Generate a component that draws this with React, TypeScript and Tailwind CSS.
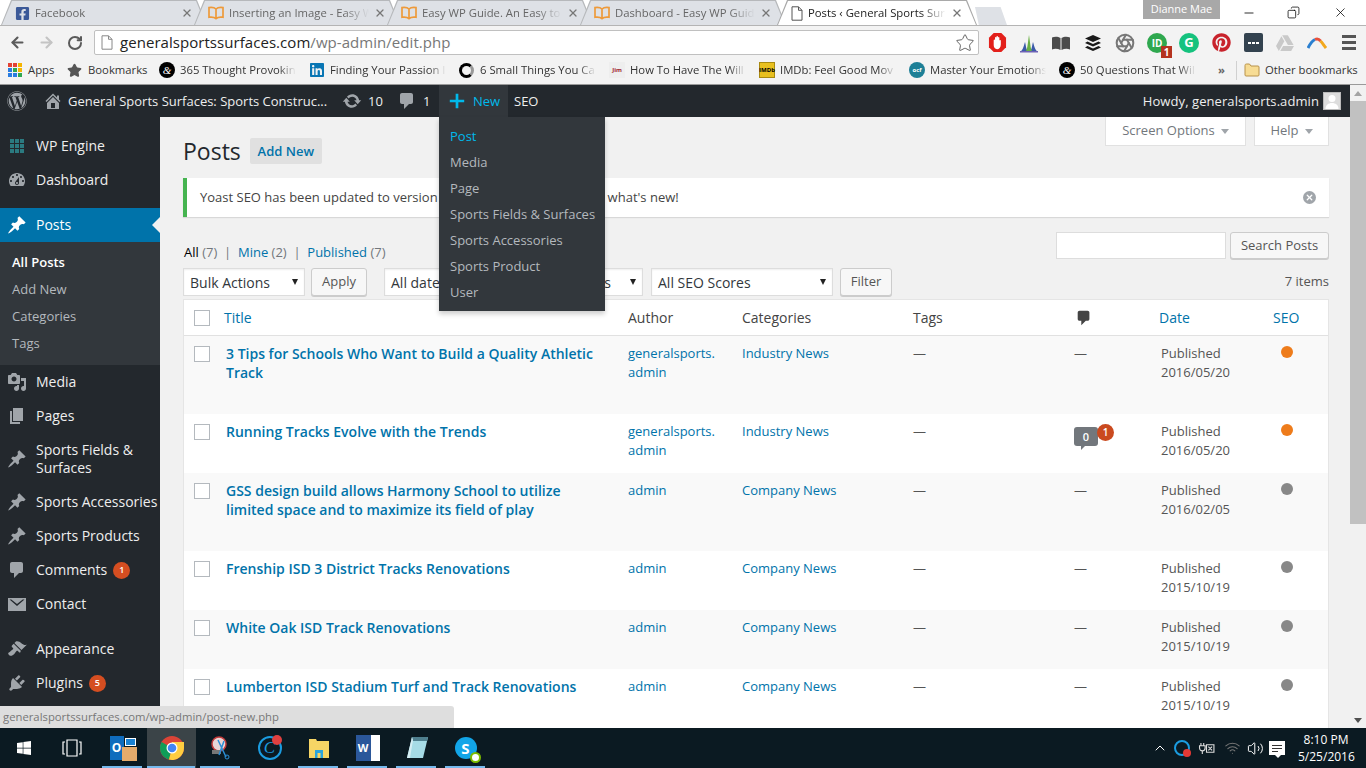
import { ArrowLeft, ArrowRight, Aperture, RotateCw, Star, X, Minus, Copy, ChevronUp, Volume2, Wifi } from 'lucide-react'
import { FaWordpress, FaPinterest, FaGoogleDrive, FaFacebookSquare, FaLinkedin, FaWindows } from 'react-icons/fa'

const PATHS = {
  pin: 'M10.44 3.02l1.82-1.82 6.36 6.35-1.83 1.82c-1.05-.68-2.48-.57-3.41.36l-.75.75c-.92.93-1.04 2.35-.35 3.41l-1.83 1.82-2.41-2.41-2.8 2.79c-.42.42-3.38 2.71-3.8 2.29s1.86-3.39 2.28-3.81l2.79-2.79L4.1 9.36l1.83-1.82c1.05.69 2.48.57 3.4-.36l.75-.75c.93-.92 1.05-2.35.36-3.41z',
  comment: 'M5 2h9c1.1 0 2 .9 2 2v7c0 1.1-.9 2-2 2h-2l-5 5v-5H5c-1.1 0-2-.9-2-2V4c0-1.1.9-2 2-2z',
  dashboard: 'M3.76 16h12.48c1.1-1.37 1.76-3.11 1.76-5 0-4.42-3.58-8-8-8s-8 3.58-8 8c0 1.89.66 3.63 1.76 5zM10 4c.55 0 1 .45 1 1s-.45 1-1 1-1-.45-1-1 .45-1 1-1zM6 6c.55 0 1 .45 1 1s-.45 1-1 1-1-.45-1-1 .45-1 1-1zm8 0c.55 0 1 .45 1 1s-.45 1-1 1-1-.45-1-1 .45-1 1-1zm-5.37 5.55L12 7v6c0 1.1-.9 2-2 2s-2-.9-2-2c0-.57.24-1.08.63-1.45zM4 10c.55 0 1 .45 1 1s-.45 1-1 1-1-.45-1-1 .45-1 1-1zm12 0c.55 0 1 .45 1 1s-.45 1-1 1-1-.45-1-1 .45-1 1-1zm-5 3c0-.55-.45-1-1-1s-1 .45-1 1 .45 1 1 1 1-.45 1-1z',
  media: 'M13 11V4c0-.55-.45-1-1-1h-1.67L9 1H5L3.67 3H2c-.55 0-1 .45-1 1v7c0 .55.45 1 1 1h10c.55 0 1-.45 1-1zM7 4.5c1.38 0 2.5 1.12 2.5 2.5S8.38 9.5 7 9.5 4.5 8.38 4.5 7 5.62 4.5 7 4.5zM14 6h5v10.5c0 1.38-1.12 2.5-2.5 2.5S14 17.88 14 16.5s1.12-2.5 2.5-2.5c.17 0 .34.02.5.05V9h-3V6zm-4 8.05V13h2v3.5c0 1.38-1.12 2.5-2.5 2.5S7 17.88 7 16.5 8.12 14 9.5 14c.17 0 .34.02.5.05z',
  page: 'M6 15V2h10v13H6zm-1 1h8v2H3V5h2v11z',
  brush: 'M14.48 11.06L7.41 3.99l1.5-1.5c.5-.56 2.3-.47 3.51.32 1.21.8 1.43 1.28 2.91 2.1 1.18.64 2.45 1.26 4.45.85zm-.71.71L6.7 4.7 4.93 6.47c-.39.39-.39 1.02 0 1.41l1.06 1.06c.39.39.39 1.03 0 1.42-.6.6-1.43 1.11-2.21 1.69-.35.26-.7.53-1.01.84C1.43 13.23.4 14.4 2.02 16c1.6 1.61 3.7.58 4.98-.71.31-.31.58-.66.84-1.01.58-.78 1.09-1.61 1.69-2.21.39-.39 1.02-.39 1.41 0l1.06 1.06c.39.39 1.02.39 1.41 0z',
  plugin: 'M13.11 4.36L9.87 7.6 8 5.73l3.24-3.24c.35-.34 1.05-.2 1.56.32.52.51.66 1.21.31 1.55zm-8 1.77l.91-1.12 9.01 9.01-1.19.84c-.71.71-2.63 1.16-3.82 1.16H6.14L4.9 17.26c-.59.59-1.54.59-2.12 0-.59-.58-.59-1.53 0-2.12l1.24-1.24v-3.88c0-1.13.4-3.19 1.09-3.89zm7.26 3.97l3.24-3.24c.34-.35 1.04-.21 1.55.31.52.51.66 1.21.31 1.55l-3.24 3.25z',
  update: 'M10.2 3.28c3.53 0 6.43 2.61 6.92 6h2.08l-3.5 4-3.5-4h2.32c-.45-1.97-2.21-3.45-4.32-3.45-1.45 0-2.73.71-3.54 1.78L4.95 5.66C6.23 4.2 8.11 3.28 10.2 3.28zm-.4 13.44c-3.52 0-6.43-2.61-6.92-6H.8l3.5-4c1.17 1.33 2.33 2.67 3.5 4H5.48c.45 1.97 2.21 3.45 4.32 3.45 1.45 0 2.73-.71 3.54-1.78l1.71 1.95c-1.28 1.46-3.15 2.38-5.25 2.38z',
  home: 'M16 8.5l1.53 1.53-1.06 1.06L10 4.62l-6.47 6.47-1.06-1.06L10 2.5l4 4v-2h2v4zm-6-2.46l6 5.99V18H4v-5.97zM12 17v-5H8v5h4z',
  plus: 'M18 8.5v3h-6.5V18h-3v-6.5H2v-3h6.5V2h3v6.5z',
  mail: 'M1 4h18v13H1zM2.5 5.5L10 12l7.5-6.5h-1.8L10 10 4.3 5.5z',
}

function Dash({ d, className }: { d: string; className?: string }) {
  return (
    <svg viewBox="0 0 20 20" className={className} fill="currentColor" fillRule="evenodd">
      <path d={d} />
    </svg>
  )
}

function BookFavicon() {
  return (
    <svg viewBox="0 0 16 14" className="h-[14px] w-[16px] shrink-0" fill="none" stroke="#ee9a3a" strokeWidth="1.7">
      <path d="M8 3C6.5 1.6 4 1.2 1 1.6v9.6c3-.4 5.500 0 7 1.400 1.500-1.400 4-1.800 7-1.400V1.600C12 1.200 9.500 1.600 8 3zM8 3v9.600" />
    </svg>
  )
}

function PageFavicon() {
  return (
    <svg viewBox="0 0 12 15" className="h-[15px] w-[12px] shrink-0" fill="#fff" stroke="#555" strokeWidth="1">
      <path d="M1 .8h6.5L11 4.3v9.900H1zM7.500.8v3.500H11" />
    </svg>
  )
}

function Tab({ title, icon, active, first }: { title: string; icon: React.ReactNode; active?: boolean; first?: boolean }) {
  return (
    <div
      className={`relative h-[25px] pt-[1px] pr-[1px] pl-[1px] [clip-path:polygon(0_100%,10px_0,calc(100%-10px)_0,100%_100%)] ${
        active ? '-ml-[9px] z-10 w-[200px] bg-[#a9a9a9]' : `w-[206px] bg-[#b6b8bb] ${first ? '' : '-ml-[13px]'}`
      }`}
    >
      <div
        className={`flex h-full items-center pl-[13px] pr-[13px] [clip-path:polygon(0_100%,10px_0,calc(100%-10px)_0,100%_100%)] ${
          active ? 'bg-white' : 'bg-[#dee1e6]'
        }`}
      >
        {icon}
        <span
          className={`ml-[5px] min-w-0 flex-1 overflow-hidden whitespace-nowrap text-[11.3px] [mask-image:linear-gradient(to_right,black_80%,transparent_98%)] ${
            active ? 'text-[#222]' : 'text-[#666]'
          }`}
        >
          {title}
        </span>
        <X className="ml-[2px] h-[12px] w-[12px] shrink-0 text-[#777]" strokeWidth={2.6} />
      </div>
    </div>
  )
}

function Ext({ children }: { children: React.ReactNode }) {
  return <div className="flex h-[25px] w-[32px] items-center justify-center">{children}</div>
}

function Extensions() {
  return (
    <div className="flex items-center">
      <Ext>
        <svg viewBox="0 0 20 22" className="h-[21px] w-[19px]">
          <path d="M6 1h8l5 5v10l-5 5H6l-5-5V6z" fill="#e3201b" />
          <path d="M6 8.500c0-1 1.400-1 1.400 0V6c0-1 1.500-1 1.500 0V5c0-1 1.600-1 1.600 0v1c0-1 1.500-1 1.500 0v3c0-1 1.500-1 1.500 0v4c0 3-2 5-4 5s-3.500-1.500-3.500-4z" fill="#fff" />
        </svg>
      </Ext>
      <Ext>
        <svg viewBox="0 0 18 20" className="h-[20px] w-[18px]">
          <path d="M1 18c2-1 3-6 4-9 1 3 1 8 3 9z" fill="#3b5aa8" />
          <path d="M10 18c2-1 2-6 3-9 1 3 2 8 4 9z" fill="#3b5aa8" />
          <path d="M6 18c1.500-2 2-10 3-16 1 6 1.500 14 3 16z" fill="#69b044" />
          <path d="M0 18h18v1.500H0z" fill="#6d62b5" />
        </svg>
      </Ext>
      <Ext>
        <svg viewBox="0 0 20 16" className="h-[16px] w-[20px]" fill="#4b4b4b">
          <path d="M1 2.500C3.500 1.500 7 1.500 9.500 3v12C7 13.700 3.500 13.500 1 14.500zM19 2.500C16.500 1.500 13 1.500 10.500 3v12c2.500-1.300 6-1.500 8.500-.5z" />
        </svg>
      </Ext>
      <Ext>
        <svg viewBox="0 0 18 18" className="h-[18px] w-[18px]" fill="#1a1a1a">
          <path d="M9 1l8 3.500L9 8 1 4.500zM3.500 7.500L9 10l5.500-2.500L17 9l-8 3.500L1 9zM3.500 12L9 14.500l5.500-2.500 2.500 1.500L9 17l-8-3.500z" />
        </svg>
      </Ext>
      <Ext>
        <Aperture className="h-[20px] w-[20px] text-[#777]" strokeWidth={2.4} />
      </Ext>
      <Ext>
        <div className="relative flex h-[20px] w-[20px] items-center justify-center rounded-full bg-[#2fa84f]">
          <span className="text-[10px] font-bold leading-none text-white">ID</span>
          <span className="absolute -bottom-[5px] -right-[5px] flex h-[12px] w-[11px] items-center justify-center bg-[#b5331f] text-[10px] font-bold leading-none text-white">1</span>
        </div>
      </Ext>
      <Ext>
        <div className="flex h-[20px] w-[20px] items-center justify-center rounded-full bg-[#15c27e]">
          <span className="text-[13px] font-bold leading-none text-white">G</span>
        </div>
      </Ext>
      <Ext>
        <FaPinterest className="h-[19px] w-[19px] text-[#c8232c]" />
      </Ext>
      <Ext>
        <div className="flex h-[19px] w-[19px] items-center justify-center gap-[1px] rounded-[2px] bg-[#33424f]">
          <span className="h-[2px] w-[3px] bg-white" />
          <span className="h-[2px] w-[3px] bg-white" />
          <span className="h-[2px] w-[3px] bg-white" />
        </div>
      </Ext>
      <Ext>
        <FaGoogleDrive className="h-[18px] w-[18px] text-[#c9c9c9]" />
      </Ext>
      <Ext>
        <svg viewBox="0 0 20 12" className="h-[12px] w-[20px]" fill="none" strokeWidth="3">
          <path d="M1 11C3 7 5 4 8 2.500" stroke="#2a7fd0" />
          <path d="M8 2.500C10 1.500 12 2 13.500 4" stroke="#e8503a" />
          <path d="M13.500 4C15.500 6 17 8.500 19 11" stroke="#f2a81d" />
        </svg>
      </Ext>
      <Ext>
        <div className="flex w-[14px] flex-col gap-[3px]">
          <span className="h-[3px] bg-[#555]" />
          <span className="h-[3px] bg-[#555]" />
          <span className="h-[3px] bg-[#555]" />
        </div>
      </Ext>
    </div>
  )
}

function Mark({ kind }: { kind: 'e' | 'ring' | 'in' | 'jim' | 'imdb' | 'ocf' }) {
  if (kind === 'e')
    return <span className="flex h-[16px] w-[16px] shrink-0 items-center justify-center rounded-full bg-black font-['Liberation_Serif',serif] text-[11px] italic leading-none text-white">&amp;</span>
  if (kind === 'ring')
    return <span className="mr-[1px] h-[15px] w-[15px] shrink-0 rounded-full border-[3px] border-black border-r-[#999]" />
  if (kind === 'in') return <FaLinkedin className="h-[16px] w-[16px] shrink-0 text-[#0976b4]" />
  if (kind === 'jim')
    return <span className="flex h-[16px] w-[16px] shrink-0 items-center justify-center bg-[#eee] text-[6px] font-bold leading-none text-[#a0262e]">Jim</span>
  if (kind === 'imdb')
    return <span className="flex h-[16px] w-[16px] shrink-0 items-center justify-center border border-[#a88a10] bg-[#e8c01f] text-[6px] font-bold leading-none text-black">IMDb</span>
  return <span className="flex h-[16px] w-[16px] shrink-0 items-center justify-center rounded-full bg-[#1d7f96] text-[6px] font-bold leading-none text-white">ocf</span>
}

const BOOKMARKS: { icon: 'e' | 'ring' | 'in' | 'jim' | 'imdb' | 'ocf'; label: string }[] = [
  { icon: 'e', label: '365 Thought Provokin' },
  { icon: 'in', label: 'Finding Your Passion I' },
  { icon: 'ring', label: '6 Small Things You Ca' },
  { icon: 'jim', label: 'How To Have The Will' },
  { icon: 'imdb', label: 'IMDb: Feel Good Mov' },
  { icon: 'ocf', label: 'Master Your Emotions' },
  { icon: 'e', label: '50 Questions That Wil' },
]

function BrowserChrome() {
  return (
    <div className="h-[85px] shrink-0 border-b border-[#9a9a9a]">
      <div className="flex h-[25px] items-start bg-white">
        <div className="flex pl-[1px]">
          <Tab first title="Facebook" icon={<FaFacebookSquare className="h-[15px] w-[15px] shrink-0 text-[#3b5998]" />} />
          <Tab title="Inserting an Image - Easy W" icon={<BookFavicon />} />
          <Tab title="Easy WP Guide. An Easy to" icon={<BookFavicon />} />
          <Tab title="Dashboard - Easy WP Guid" icon={<BookFavicon />} />
          <Tab active title="Posts ‹ General Sports Sur" icon={<PageFavicon />} />
          <div className="-ml-[2px] mt-[7px] h-[18px] w-[32px] bg-[#dee1e6] [clip-path:polygon(0_0,80%_0,100%_100%,12%_100%)]" />
        </div>
        <div className="ml-[136px] flex h-[19px] w-[77px] items-center justify-center bg-[#a8a8a8] text-[11px] text-white">Dianne Mae</div>
        <div className="ml-auto flex items-center pt-[5px]">
          <Minus className="h-[14px] w-[14px] text-black" strokeWidth={1.4} />
          <Copy className="ml-[31px] h-[13px] w-[13px] -scale-x-100 text-black" strokeWidth={1.4} />
          <X className="ml-[33px] mr-[18px] h-[15px] w-[15px] text-black" strokeWidth={1.2} />
        </div>
      </div>
      <div className="flex h-[34px] items-center border-t border-[#b4b4b4] bg-[#f3f3f3] pl-[9px]">
        <ArrowLeft className="h-[17px] w-[17px] text-[#5a5a5a]" strokeWidth={3} />
        <ArrowRight className="ml-[12px] h-[17px] w-[17px] text-[#c4c4c4]" strokeWidth={3} />
        <RotateCw className="ml-[12px] h-[16px] w-[16px] text-[#5a5a5a]" strokeWidth={3} />
        <div className="ml-[11px] flex h-[25px] w-[885px] items-center rounded-[2px] border border-[#c0c0c0] bg-white pl-[6px] pr-[3px]">
          <svg viewBox="0 0 12 15" className="h-[15px] w-[12px]" fill="#fff" stroke="#888" strokeWidth="1">
            <path d="M1 .8h6.500L11 4.300v9.900H1zM7.500.8v3.500H11" />
          </svg>
          <span className="ml-[7px] text-[15px] tracking-[0.05px] text-[#222]">
            generalsportssurfaces.com<span className="text-[#777]">/wp-admin/edit.php</span>
          </span>
          <Star className="ml-auto h-[20px] w-[20px] text-[#666]" strokeWidth={1.2} />
        </div>
        <div className="ml-[2px]">
          <Extensions />
        </div>
      </div>
      <div className="flex h-[25px] items-center bg-[#f3f3f3] pb-[3px] pl-[8px] text-[11.3px] text-[#333]">
        <div className="grid h-[14px] w-[14px] grid-cols-3 gap-[1px]">
          {['#e34234', '#e34234', '#f5b400', '#2a7de1', '#2fa84f', '#f5b400', '#2a7de1', '#2a7de1', '#2fa84f'].map((c, i) => (
            <span key={i} style={{ backgroundColor: c }} />
          ))}
        </div>
        <span className="ml-[6px] w-[39px]">Apps</span>
        <Star className="h-[15px] w-[15px] fill-[#555] text-[#555]" />
        <span className="ml-[6px] w-[71px]">Bookmarks</span>
        {BOOKMARKS.map((b, i) => (
          <div key={i} className="flex w-[150px] items-center pr-[13px]">
            <Mark kind={b.icon} />
            <span className="ml-[5px] min-w-0 flex-1 overflow-hidden whitespace-nowrap [mask-image:linear-gradient(to_right,black_85%,transparent)]">{b.label}</span>
          </div>
        ))}
        <span className="ml-[9px] font-bold text-[#666]">»</span>
        <span className="ml-[11px] h-[19px] w-px bg-[#d0d0d0]" />
        <svg viewBox="0 0 16 14" className="ml-[7px] h-[14px] w-[16px]" fill="#f7dc94" stroke="#b8924a">
          <path d="M1 2.500C1 1.500 1.500 1 2.500 1h3L7 3h7c.6 0 1 .4 1 1v8c0 .6-.4 1-1 1H2c-.6 0-1-.4-1-1z" />
        </svg>
        <span className="ml-[5px] whitespace-nowrap">Other bookmarks</span>
      </div>
    </div>
  )
}

function AdminBar() {
  return (
    <div className="flex h-[32px] shrink-0 items-center bg-[#23282d] text-[13px] text-[#eee]">
      <FaWordpress className="ml-[7px] h-[20px] w-[20px] text-[#a0a5aa]" />
      <Dash d={PATHS.home} className="ml-[16px] h-[20px] w-[20px] text-[#a0a5aa]" />
      <span className="ml-[5px] mt-[2px] w-[260px] whitespace-nowrap">General Sports Surfaces: Sports Construc...</span>
      <Dash d={PATHS.update} className="ml-[14px] h-[20px] w-[20px] text-[#a0a5aa]" />
      <span className="ml-[6px] mt-[2px] w-[21px]">10</span>
      <Dash d={PATHS.comment} className="ml-[8px] h-[20px] w-[20px] text-[#a0a5aa]" />
      <span className="ml-[6px] mt-[2px] w-[11px]">1</span>
      <div className="relative ml-[5px] flex h-[32px] w-[69px] items-center bg-[#32373c] pl-[9px] text-[#00b9eb]">
        <Dash d={PATHS.plus} className="h-[18px] w-[18px]" />
        <span className="ml-[7px] mt-[2px]">New</span>
        <div className="absolute left-0 top-[32px] z-50 w-[166px] bg-[#32373c] pb-[5px] pt-[7px] text-[#b4b9be] shadow-[0_3px_5px_rgba(0,0,0,0.2)]">
          {['Post', 'Media', 'Page', 'Sports Fields & Surfaces', 'Sports Accessories', 'Sports Product', 'User'].map((item, i) => (
            <div key={item} className={`flex h-[26px] items-center whitespace-nowrap pl-[11px] ${i === 0 ? 'text-[#00b9eb]' : ''}`}>
              {item}
            </div>
          ))}
        </div>
      </div>
      <span className="ml-[6px] mt-[2px]">SEO</span>
      <span className="ml-auto mt-[2px] tracking-[0.08px]">Howdy, generalsports.admin</span>
      <div className="ml-[4px] mr-[9px] flex h-[18px] w-[18px] items-end justify-center overflow-hidden border border-[#bbb] bg-[#ddd]">
        <svg viewBox="0 0 16 16" className="h-[16px] w-[16px]" fill="#fff">
          <circle cx="8" cy="5.500" r="3.500" />
          <path d="M1.500 16c0-4 3-6 6.500-6s6.500 2 6.500 6z" />
        </svg>
      </div>
    </div>
  )
}

function MenuItem({ icon, label, badge, h = 'h-[34px]' }: { icon: React.ReactNode; label: React.ReactNode; badge?: string; h?: string }) {
  return (
    <div className={`flex ${h} items-center text-[14px] leading-[18px] text-[#eee]`}>
      <div className="flex w-[36px] shrink-0 items-center justify-center pr-[2px] text-[#a0a5aa]">{icon}</div>
      <span className="min-w-0">{label}</span>
      {badge && (
        <span className="ml-[6px] flex h-[17px] w-[17px] items-center justify-center rounded-full bg-[#d54e21] text-[9px] font-semibold text-white">{badge}</span>
      )}
    </div>
  )
}

function Sidebar() {
  const icon = 'h-[20px] w-[20px]'
  return (
    <div className="w-[160px] shrink-0 overflow-hidden bg-[#23282d] pt-[12px]">
      <MenuItem
        label="WP Engine"
        icon={
          <div className="grid h-[14px] w-[14px] grid-cols-3 gap-[1px]">
            {Array.from({ length: 9 }).map((_, i) => (
              <span key={i} className="bg-[#2b7a80]" />
            ))}
          </div>
        }
      />
      <MenuItem label="Dashboard" icon={<Dash d={PATHS.dashboard} className={icon} />} />
      <div className="h-[11px]" />
      <div className="relative flex h-[34px] items-center bg-[#0073aa] text-[14px] text-white">
        <div className="flex w-[36px] shrink-0 items-center justify-center pr-[2px]">
          <Dash d={PATHS.pin} className={icon} />
        </div>
        <span className="-mt-[2px]">Posts</span>
        <span className="absolute right-0 top-[9px] h-0 w-0 border-y-[8px] border-r-[8px] border-y-transparent border-r-[#f1f1f1]" />
      </div>
      <div className="h-[123px] bg-[#32373c] pt-[7px] text-[13px]">
        <div className="flex h-[27px] items-center pl-[12px] font-semibold text-white">All Posts</div>
        <div className="flex h-[27px] items-center pl-[12px] text-[#b4b9be]">Add New</div>
        <div className="flex h-[27px] items-center pl-[12px] text-[#b4b9be]">Categories</div>
        <div className="flex h-[27px] items-center pl-[12px] text-[#b4b9be]">Tags</div>
      </div>
      <MenuItem label="Media" icon={<Dash d={PATHS.media} className={icon} />} />
      <MenuItem label="Pages" icon={<Dash d={PATHS.page} className={icon} />} />
      <MenuItem h="h-[52px]" label={<>Sports Fields &amp;<br />Surfaces</>} icon={<Dash d={PATHS.pin} className={icon} />} />
      <MenuItem label={<span className="whitespace-nowrap">Sports Accessories</span>} icon={<Dash d={PATHS.pin} className={icon} />} />
      <MenuItem label="Sports Products" icon={<Dash d={PATHS.pin} className={icon} />} />
      <MenuItem label="Comments" badge="1" icon={<Dash d={PATHS.comment} className={icon} />} />
      <MenuItem label="Contact" icon={<Dash d={PATHS.mail} className={icon} />} />
      <div className="h-[11px]" />
      <MenuItem label="Appearance" icon={<Dash d={PATHS.brush} className={icon} />} />
      <MenuItem label="Plugins" badge="5" icon={<Dash d={PATHS.plugin} className={icon} />} />
    </div>
  )
}

function Select({ label, className }: { label: string; className: string }) {
  return (
    <div className={`flex h-[28px] items-center justify-between border border-[#ddd] bg-white pl-[6px] pr-[6px] text-[14px] text-[#32373c] shadow-[inset_0_1px_2px_rgba(0,0,0,0.07)] ${className}`}>
      <span className="whitespace-nowrap">{label}</span>
      <span className="h-0 w-0 border-x-[3.5px] border-t-[6px] border-x-transparent border-t-[#222]" />
    </div>
  )
}

function Button({ label, className }: { label: string; className: string }) {
  return (
    <div className={`flex h-[28px] items-center justify-center rounded-[3px] border border-[#ccc] bg-[#f7f7f7] text-[13px] text-[#555] shadow-[0_1px_0_#ccc] ${className}`}>
      {label}
    </div>
  )
}

const GRID = 'grid grid-cols-[40px_404px_114px_171px_163px_83px_114px_56px]'

const ROWS = [
  { h: 'h-[78px]', title: '3 Tips for Schools Who Want to Build a Quality Athletic Track', author: ['generalsports.', 'admin'], cat: 'Industry News', date: '2016/05/20', seo: 'bg-[#ee7c1b]', bubble: false, bg: 'bg-[#f9f9f9]' },
  { h: 'h-[59px]', title: 'Running Tracks Evolve with the Trends', author: ['generalsports.', 'admin'], cat: 'Industry News', date: '2016/05/20', seo: 'bg-[#ee7c1b]', bubble: true, bg: 'bg-white' },
  { h: 'h-[78px]', title: 'GSS design build allows Harmony School to utilize limited space and to maximize its field of play', author: ['admin'], cat: 'Company News', date: '2016/02/05', seo: 'bg-[#888888]', bubble: false, bg: 'bg-[#f9f9f9]' },
  { h: 'h-[59px]', title: 'Frenship ISD 3 District Tracks Renovations', author: ['admin'], cat: 'Company News', date: '2015/10/19', seo: 'bg-[#888888]', bubble: false, bg: 'bg-white' },
  { h: 'h-[59px]', title: 'White Oak ISD Track Renovations', author: ['admin'], cat: 'Company News', date: '2015/10/19', seo: 'bg-[#888888]', bubble: false, bg: 'bg-[#f9f9f9]' },
  { h: 'h-[59px]', title: 'Lumberton ISD Stadium Turf and Track Renovations', author: ['admin'], cat: 'Company News', date: '2015/10/19', seo: 'bg-[#888888]', bubble: false, bg: 'bg-white' },
]

function PostsTable() {
  return (
    <div className="mt-[3px] border-x border-t border-[#e5e5e5] bg-white text-[13px] leading-[19px]">
      <div className={`${GRID} h-[36px] items-center border-b border-[#e1e1e1] text-[14px]`}>
        <span className="ml-[10px] h-[16px] w-[16px] border border-[#b4b9be] bg-white" />
        <span className="text-[#0073aa]">Title</span>
        <span className="text-[#444]">Author</span>
        <span className="text-[#444]">Categories</span>
        <span className="text-[#444]">Tags</span>
        <Dash d={PATHS.comment} className="-ml-[1px] h-[18px] w-[18px] text-[#444]" />
        <span className="text-[#0073aa]">Date</span>
        <span className="text-[#0073aa]">SEO</span>
      </div>
      {ROWS.map((r) => (
        <div key={r.title} className={`${GRID} ${r.h} ${r.bg} pt-[8px] text-[#555]`}>
          <span className="ml-[10px] mt-[2px] h-[16px] w-[16px] border border-[#b4b9be] bg-white" />
          <div className="pl-[2px] pr-[27px] text-[14px] font-semibold text-[#0073aa]">{r.title}</div>
          <div className="text-[#0073aa]">
            {r.author.map((a) => (
              <div key={a}>{a}</div>
            ))}
          </div>
          <div className="text-[#0073aa]">{r.cat}</div>
          <div>—</div>
          <div>
            {r.bubble ? (
              <div className="relative -ml-[2px] mt-[5px] flex h-[19px] w-[24px] items-center justify-center rounded-[3px] bg-[#72777c] text-[11px] font-semibold text-white">
                0
                <span className="absolute -bottom-[4px] left-[7px] h-0 w-0 border-r-[5px] border-t-[5px] border-r-transparent border-t-[#72777c]" />
                <span className="absolute -right-[16px] -top-[3px] flex h-[17px] w-[17px] items-center justify-center rounded-full bg-[#ca4a1f] text-[10px] text-white">1</span>
              </div>
            ) : (
              <span className="-ml-[2px] block">—</span>
            )}
          </div>
          <div className="pl-[2px]">
            Published
            <br />
            {r.date}
          </div>
          <span className={`ml-[8px] mt-[2px] h-[12px] w-[12px] rounded-full ${r.seo}`} />
        </div>
      ))}
    </div>
  )
}

function Content() {
  return (
    <div className="min-w-0 flex-1 overflow-hidden pl-[23px] pr-[21px] text-[13px] text-[#444]">
      <div className="flex h-[47px] items-start">
        <div className="flex items-center pt-[21px]">
          <span className="text-[23px] leading-[26px] text-[#23282d]">Posts</span>
          <span className="ml-[9px] flex h-[26px] w-[72px] items-center justify-center rounded-[2px] bg-[#e0e0e0] pt-[2px] font-semibold text-[#0073aa]">Add New</span>
        </div>
        <div className="ml-auto flex gap-[8px]">
          <div className="flex h-[29px] w-[141px] items-center justify-center gap-[6px] border-x border-b border-[#e1e1e1] bg-white text-[#72777c]">
            Screen Options
            <span className="h-0 w-0 border-x-[4px] border-t-[5px] border-x-transparent border-t-[#a0a5aa]" />
          </div>
          <div className="flex h-[29px] w-[75px] items-center justify-center gap-[6px] border-x border-b border-[#e1e1e1] bg-white text-[#72777c]">
            Help
            <span className="h-0 w-0 border-x-[4px] border-t-[5px] border-x-transparent border-t-[#a0a5aa]" />
          </div>
        </div>
      </div>
      <div className="mt-[14px] flex h-[39px] items-center border-l-4 border-[#46b450] bg-white pl-[13px] pr-[13px] shadow-[0_1px_1px_rgba(0,0,0,0.1)]">
        <span className="whitespace-nowrap">Yoast SEO has been updated to version</span>
        <span className="ml-[170px] whitespace-nowrap">what's new!</span>
        <span className="relative ml-auto flex h-[13px] w-[13px] items-center justify-center rounded-full bg-[#a0a5aa] text-white">
          <X className="h-[9px] w-[9px]" strokeWidth={3.5} />
        </span>
      </div>
      <div className="mt-[15px] flex h-[27px] items-end">
        <div className="-mb-[3px] ml-[1px] leading-[19px] text-[#72777c]">
          <span className="text-[#000]">All</span> (7) &nbsp;|&nbsp; <span className="text-[#0073aa]">Mine</span> (2) &nbsp;|&nbsp; <span className="text-[#0073aa]">Published</span> (7)
        </div>
        <div className="ml-auto flex h-[27px] w-[170px] border border-[#ddd] bg-white" />
        <div className="ml-[4px]">
          <Button label="Search Posts" className="w-[99px] !h-[27px]" />
        </div>
      </div>
      <div className="mt-[9px] flex items-center">
        <Select label="Bulk Actions" className="w-[122px]" />
        <Button label="Apply" className="ml-[6px] w-[56px]" />
        <Select label="All dates" className="ml-[17px] w-[125px]" />
        <Select label="All Categories" className="ml-[6px] w-[128px]" />
        <Select label="All SEO Scores" className="ml-[8px] w-[182px]" />
        <Button label="Filter" className="ml-[7px] w-[52px]" />
        <span className="ml-auto text-[#555]">7 items</span>
      </div>
      <PostsTable />
    </div>
  )
}

function Scrollbar() {
  return (
    <div className="flex w-[16px] shrink-0 flex-col items-center bg-[#f1f1f1]">
      <div className="flex h-[16px] items-center justify-center">
        <span className="h-0 w-0 border-x-[4px] border-b-[5px] border-x-transparent border-b-[#a3a3a3]" />
      </div>
      <div className="h-[423px] w-full bg-[#c1c1c1]" />
      <div className="mt-auto flex h-[16px] items-center justify-center">
        <span className="h-0 w-0 border-x-[4px] border-t-[5px] border-x-transparent border-t-[#505050]" />
      </div>
    </div>
  )
}

function TaskIcon({ children, active, noBar }: { children: React.ReactNode; active?: boolean; noBar?: boolean }) {
  return (
    <div className={`relative flex h-[40px] w-[49px] items-center justify-center ${active ? 'bg-[#3b4448]' : ''}`}>
      {children}
      {!noBar && <span className={`absolute bottom-0 h-[2px] bg-[#76b9ed] ${active ? 'left-0 w-[48px]' : 'left-[4px] w-[40px]'}`} />}
    </div>
  )
}

function ChromeLogo() {
  return (
    <svg viewBox="0 0 24 24" className="h-[24px] w-[24px]">
      <circle cx="12" cy="12" r="12" fill="#db4437" />
      <path d="M12 12L1.600 6A12 12 0 0 0 9 23.600z" fill="#0f9d58" />
      <path d="M12 12l-3 11.600A12 12 0 0 0 24 12V6H12z" fill="#ffcd40" />
      <circle cx="12" cy="12" r="5.500" fill="#fff" />
      <circle cx="12" cy="12" r="4.300" fill="#4285f4" />
    </svg>
  )
}

function Taskbar() {
  return (
    <div className="flex h-[40px] shrink-0 items-center bg-[#0b1a22] text-white">
      <FaWindows className="ml-[16px] h-[16px] w-[16px]" />
      <svg viewBox="0 0 20 18" className="ml-[30px] h-[18px] w-[20px]" fill="none" stroke="#fff" strokeWidth="1.2">
        <path d="M5 1h10v16H5zM3 3H1v12h2M17 3h2v12h-2" />
      </svg>
      <div className="ml-[16px] flex">
        <TaskIcon>
          <div className="relative h-[24px] w-[26px]">
            <span className="absolute left-0 top-0 flex h-[24px] w-[14px] items-center justify-center bg-[#0f6cbd] text-[12px] font-bold">O</span>
            <span className="absolute right-0 top-[2px] h-[8px] w-[11px] border border-white bg-[#1b82d2]" />
            <span className="absolute bottom-[-1px] right-[-1px] h-[14px] w-[15px] bg-[#e5ab6b]" />
          </div>
        </TaskIcon>
        <TaskIcon active>
          <ChromeLogo />
        </TaskIcon>
        <TaskIcon>
          <svg viewBox="0 0 24 24" className="h-[26px] w-[24px]" fill="none">
            <circle cx="10" cy="8" r="7" fill="#e9d6d6" stroke="#c23a3a" strokeWidth="1.500" />
            <path d="M3 14h9v4H3z" fill="#777" />
            <path d="M9 4l8 17M15 5l-5 14" stroke="#2b8fd6" strokeWidth="1.500" />
            <circle cx="18" cy="21" r="2" stroke="#2b8fd6" />
          </svg>
        </TaskIcon>
        <TaskIcon noBar>
          <div className="relative flex h-[24px] w-[24px] items-center justify-center rounded-full border-2 border-[#1b9ce0] font-['Liberation_Serif',serif] text-[17px] italic text-[#1b9ce0]">
            C
            <span className="absolute -right-[2px] -top-[3px] h-[10px] w-[10px] rounded-full bg-[#e04040]" />
          </div>
        </TaskIcon>
        <TaskIcon>
          <svg viewBox="0 0 22 22" className="h-[24px] w-[22px]">
            <path d="M1 2h7l1 2h12v17H1z" fill="#f6d565" />
            <path d="M7 13h8v8H7z" fill="#2ba4dc" />
            <path d="M9.500 16h3v5h-3z" fill="#f6d565" />
          </svg>
        </TaskIcon>
        <TaskIcon>
          <div className="flex h-[26px] w-[24px] items-center bg-white">
            <span className="flex h-full w-[15px] items-center justify-center bg-[#2b579a] text-[11px] font-bold">W</span>
          </div>
        </TaskIcon>
        <TaskIcon>
          <svg viewBox="0 0 24 24" className="h-[24px] w-[24px]">
            <path d="M7 1h16l-5 21H2z" fill="#a6dbe6" />
            <path d="M7 1h16l-1 4H6z" fill="#4f7f8e" />
            <path d="M2 22l5-21 1 3-3 18z" fill="#d6eef4" />
          </svg>
        </TaskIcon>
        <TaskIcon>
          <div className="relative flex h-[22px] w-[22px] items-center justify-center rounded-full bg-[#12a5e8] text-[15px] font-bold">
            S
            <span className="absolute -bottom-[4px] -right-[4px] h-[11px] w-[11px] rounded-full border-2 border-[#7cbb00] bg-white" />
          </div>
        </TaskIcon>
      </div>
      <div className="ml-auto flex items-center">
        <ChevronUp className="h-[16px] w-[16px]" strokeWidth={1.5} />
        <div className="relative ml-[6px] h-[16px] w-[16px] rounded-full border-2 border-[#1b9ce0]">
          <span className="absolute -bottom-[3px] -right-[3px] h-[8px] w-[8px] rounded-full bg-[#e53935]" />
        </div>
        <svg viewBox="0 0 18 14" className="ml-[8px] h-[13px] w-[17px]" fill="none" stroke="#ddd" strokeWidth="1.200">
          <path d="M3 1v3M6 1v3M1.500 4h6v2.500a3 3 0 0 1-6 0zM4.500 9.500V13M9 3h8v8H9zM11 5l4 4M15 5l-4 4" />
        </svg>
        <Wifi className="ml-[9px] h-[16px] w-[17px] text-[#777]" strokeWidth={1.6} />
        <Volume2 className="ml-[6px] h-[17px] w-[17px]" strokeWidth={1.4} />
        <div className="relative ml-[5px] flex h-[14px] w-[16px] flex-col justify-center gap-[2px] bg-white px-[3px]">
          <span className="h-px bg-[#333]" />
          <span className="h-px bg-[#333]" />
          <span className="h-px w-[6px] bg-[#333]" />
          <span className="absolute -bottom-[3px] left-[6px] h-0 w-0 border-x-[3px] border-t-[3px] border-x-transparent border-t-white" />
        </div>
        <div className="ml-[13px] mr-[12px] w-[56px] text-center text-[12px] leading-[17px]">
          8:10 PM
          <br />
          5/25/2016
        </div>
      </div>
    </div>
  )
}

export default function App() {
  return (
    <div className="relative flex h-[768px] w-[1366px] flex-col overflow-hidden bg-white font-['Open_Sans','Noto_Sans',sans-serif]">
      <BrowserChrome />
      <div className="flex min-h-0 flex-1">
        <div className="flex min-w-0 flex-1 flex-col">
          <AdminBar />
          <div className="flex min-h-0 flex-1 bg-[#f1f1f1]">
            <Sidebar />
            <Content />
          </div>
        </div>
        <Scrollbar />
      </div>
      <div className="absolute bottom-[40px] left-0 z-40 flex h-[22px] w-[454px] items-center rounded-tr-[3px] bg-[#dedede] pl-[3px] text-[11.3px] text-[#777]">
        generalsportssurfaces.com/wp-admin/post-new.php
      </div>
      <Taskbar />
    </div>
  )
}
